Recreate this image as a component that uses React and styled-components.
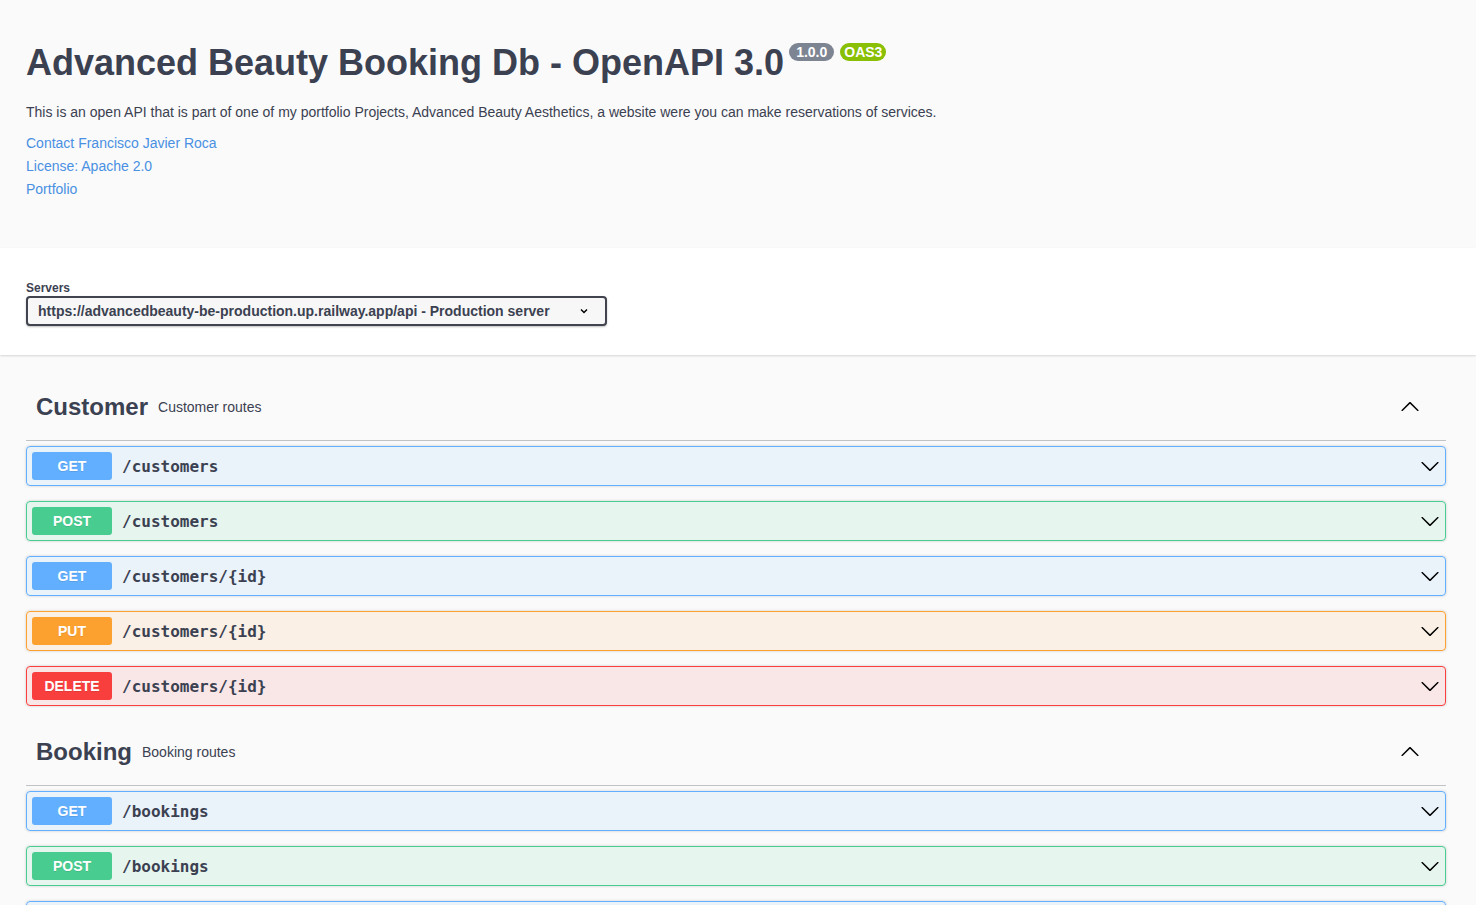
import React from "react";
import styled, { createGlobalStyle } from "styled-components";

const GlobalStyle = createGlobalStyle`
  html, body {
    margin: 0;
    padding: 0;
    background: #fafafa;
  }
  body {
    font-family: "Liberation Sans", Arial, sans-serif;
    color: #3b4151;
  }
`;

const methodColors = {
  GET: "97, 175, 254",
  POST: "73, 204, 144",
  PUT: "252, 161, 48",
  DELETE: "249, 62, 62",
};

const Page = styled.div`
  min-height: 100vh;
  background: #fafafa;
`;

const Wrapper = styled.div`
  box-sizing: border-box;
  width: 1420px;
  margin-left: 26px;
`;

const Info = styled.div`
  padding: 37px 0 47px;
`;

const Title = styled.h2`
  margin: 0 0 14px;
  font-size: 36px;
  font-weight: 700;
  line-height: 51px;
  color: #3b4151;
  display: flex;
  align-items: flex-start;
`;

const Badge = styled.span`
  display: inline-block;
  margin: 6px 0 0 ${(p) => p.$ml}px;
  padding: 1px ${(p) => p.$px}px;
  border-radius: 57px;
  background: ${(p) => p.$bg};
  color: #fff;
  font-size: 14px;
  font-weight: 700;
  line-height: 16px;
`;

const Description = styled.p`
  margin: 0 0 10px;
  font-size: 14px;
  line-height: 20px;
`;

const LinkRow = styled.div`
  font-size: 14px;
  line-height: 23px;
`;

const InfoLink = styled.a`
  color: #4990e2;
  text-decoration: none;
`;

const SchemeContainer = styled.section`
  background: #fff;
  box-shadow: 0 1px 2px 0 rgba(0, 0, 0, 0.15);
  padding: 30px 0 29px;
  margin: 0 0 20px;
`;

const Label = styled.div`
  font-size: 12px;
  font-weight: 700;
  line-height: 14px;
  margin: 3px 0 1px;
`;

const Select = styled.div`
  box-sizing: border-box;
  width: 581px;
  height: 30px;
  display: flex;
  align-items: center;
  justify-content: space-between;
  padding: 0 16px 0 10px;
  border: 2px solid #41444e;
  border-radius: 4px;
  background: #f7f7f7;
  box-shadow: 0 1px 2px 0 rgba(0, 0, 0, 0.25);
  font-size: 14px;
  font-weight: 700;
  color: #3b4151;
`;

const TagSection = styled.section`
  & + & {
    margin-top: -1px;
  }
`;

const TagHeader = styled.h3`
  box-sizing: border-box;
  height: 66px;
  margin: 0 0 5px;
  padding: 0 20px 1px 10px;
  display: flex;
  align-items: center;
  border-bottom: 1px solid rgba(59, 65, 81, 0.3);
  font-size: 24px;
  font-weight: 700;
  color: #3b4151;
`;

const TagDesc = styled.small`
  flex: 1;
  padding: 0 10px;
  font-size: 14px;
  font-weight: 400;
`;

const Opblock = styled.div`
  box-sizing: border-box;
  height: 40px;
  margin: 0 0 15px;
  padding: 5px;
  display: flex;
  align-items: center;
  border: 1px solid rgb(${(p) => methodColors[p.$method]});
  border-radius: 4px;
  background: rgba(${(p) => methodColors[p.$method]}, 0.1);
  box-shadow: 0 0 3px rgba(0, 0, 0, 0.19);
`;

const Method = styled.span`
  min-width: 80px;
  padding: 6px 0;
  border-radius: 3px;
  background: rgb(${(p) => methodColors[p.$method]});
  color: #fff;
  text-align: center;
  font-size: 14px;
  font-weight: 700;
  line-height: 16px;
  text-shadow: 0 1px 0 rgba(0, 0, 0, 0.1);
`;

const Path = styled.span`
  flex: 1;
  padding: 0 10px;
  font-family: "DejaVu Sans Mono", monospace;
  font-size: 16px;
  font-weight: 700;
  color: #3b4151;
`;

const Arrow = ({ up, size = 20 }) => (
  <svg
    width={size}
    height={size}
    viewBox="0 0 20 20"
    style={{ transform: up ? "rotate(180deg)" : "none", flexShrink: 0 }}
  >
    <path
      fill="#000"
      d="M17.418 6.109c.272-.268.709-.268.979 0s.271.701 0 .969l-7.908 7.83c-.27.268-.707.268-.979 0l-7.908-7.83c-.27-.268-.27-.701 0-.969.271-.268.709-.268.979 0L10 13.25l7.418-7.141z"
    />
  </svg>
);

const SmallChevron = () => (
  <svg width="10" height="10" viewBox="0 0 10 10">
    <path d="M2 3.5 L5 6.5 L8 3.5" fill="none" stroke="#000" strokeWidth="1.5" />
  </svg>
);

const ArrowSlot = styled.span`
  display: flex;
  align-items: center;
  margin-right: ${(p) => p.$mr || 0}px;
`;

const tags = [
  {
    name: "Customer",
    desc: "Customer routes",
    ops: [
      ["GET", "/customers"],
      ["POST", "/customers"],
      ["GET", "/customers/{id}"],
      ["PUT", "/customers/{id}"],
      ["DELETE", "/customers/{id}"],
    ],
  },
  {
    name: "Booking",
    desc: "Booking routes",
    ops: [
      ["GET", "/bookings"],
      ["POST", "/bookings"],
      ["GET", "/bookings/{id}"],
    ],
  },
];

export default function App() {
  return (
    <Page>
      <GlobalStyle />
      <Wrapper>
        <Info>
          <Title>
            Advanced Beauty Booking Db - OpenAPI 3.0
            <Badge $bg="#7d8492" $ml={5} $px={7}>1.0.0</Badge>
            <Badge $bg="#89bf04" $ml={6} $px={4}>OAS3</Badge>
          </Title>
          <Description>
            This is an open API that is part of one of my portfolio Projects, Advanced Beauty
            Aesthetics, a website were you can make reservations of services.
          </Description>
          <LinkRow>
            <InfoLink href="#">Contact Francisco Javier Roca</InfoLink>
          </LinkRow>
          <LinkRow>
            <InfoLink href="#">License: Apache 2.0</InfoLink>
          </LinkRow>
          <LinkRow>
            <InfoLink href="#">Portfolio</InfoLink>
          </LinkRow>
        </Info>
      </Wrapper>

      <SchemeContainer>
        <Wrapper>
          <Label>Servers</Label>
          <Select>
            <span>https://advancedbeauty-be-production.up.railway.app/api - Production server</span>
            <SmallChevron />
          </Select>
        </Wrapper>
      </SchemeContainer>

      <Wrapper>
        {tags.map((tag) => (
          <TagSection key={tag.name}>
            <TagHeader>
              <span>{tag.name}</span>
              <TagDesc>{tag.desc}</TagDesc>
              <ArrowSlot $mr={6}>
                <Arrow up />
              </ArrowSlot>
            </TagHeader>
            {tag.ops.map(([method, path], i) => (
              <Opblock key={i} $method={method}>
                <Method $method={method}>{method}</Method>
                <Path>{path}</Path>
                <ArrowSlot>
                  <Arrow />
                </ArrowSlot>
              </Opblock>
            ))}
          </TagSection>
        ))}
      </Wrapper>
    </Page>
  );
}
